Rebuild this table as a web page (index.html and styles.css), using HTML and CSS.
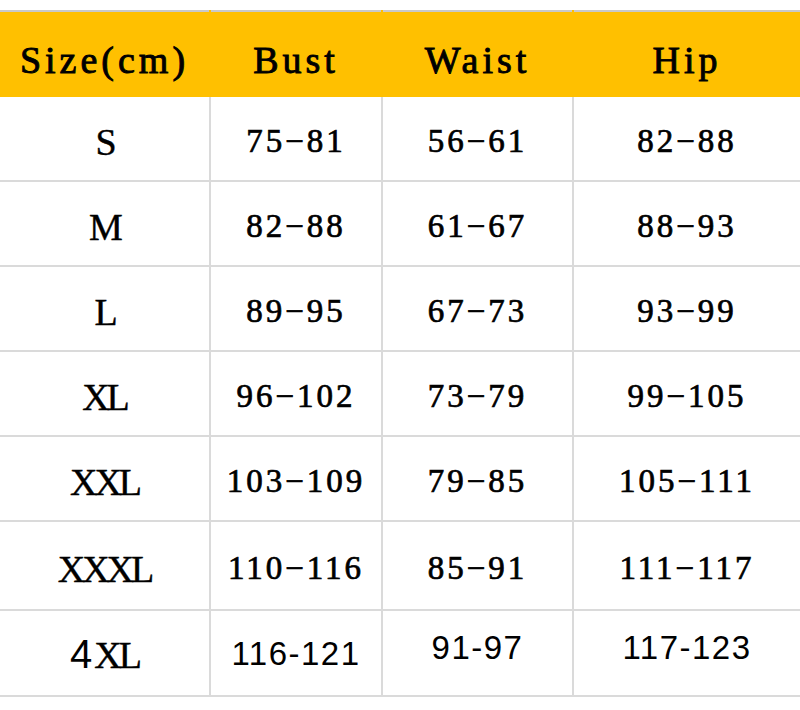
FILE: index.html
```html
<!DOCTYPE html>
<html>
<head>
<meta charset="utf-8">
<link rel="stylesheet" href="styles.css">
</head>
<body>
<table class="chart">
  <colgroup>
    <col class="c1"><col class="c2"><col class="c3"><col class="c4">
  </colgroup>
  <thead>
    <tr class="head">
      <th>Size(cm)</th><th>Bust</th><th>Waist</th><th>Hip</th>
    </tr>
  </thead>
  <tbody>
    <tr><td class="sz">S</td><td class="num">75−81</td><td class="num">56−61</td><td class="num">82−88</td></tr>
    <tr><td class="sz">M</td><td class="num">82−88</td><td class="num">61−67</td><td class="num">88−93</td></tr>
    <tr><td class="sz">L</td><td class="num">89−95</td><td class="num">67−73</td><td class="num">93−99</td></tr>
    <tr><td class="sz">XL</td><td class="num">96−102</td><td class="num">73−79</td><td class="num">99−105</td></tr>
    <tr><td class="sz">XXL</td><td class="num">103−109</td><td class="num">79−85</td><td class="num">105−111</td></tr>
    <tr class="tall"><td class="sz">XXXL</td><td class="num">110−116</td><td class="num">85−91</td><td class="num">111−117</td></tr>
    <tr class="last"><td class="sz"><span class="sans">4</span>XL</td><td class="sans">116-121</td><td class="sans up">91-97</td><td class="sans up">117-123</td></tr>
  </tbody>
</table>
</body>
</html>
```
FILE: styles.css
```css
html, body {
  margin: 0;
  padding: 0;
  background: #ffffff;
}
body {
  padding-top: 10px;
}
.chart {
  border-collapse: collapse;
  table-layout: fixed;
  width: 800px;
  color: #000;
}
.c1 { width: 210px; }
.c2 { width: 172px; }
.c3 { width: 191px; }
.c4 { width: 227px; }

.chart th, .chart td {
  border: 2px solid #dadada;
  text-align: center;
  padding: 0;
}
.chart th:first-child, .chart td:first-child { border-left: none; }
.chart th:last-child, .chart td:last-child { border-right: none; }
.head th {
  background: #ffc000;
  border-color: #ffc000;
  border-top-color: #c9c9c9;
  height: 85px;
  font-family: "Liberation Serif", serif;
  font-weight: normal;
  font-size: 38px;
  letter-spacing: 4px;
  -webkit-text-stroke: 0.9px #000;
  padding-top: 12px;
  box-sizing: border-box;
}
.chart tbody tr { height: 85px; }
.chart tbody tr.tall { height: 89px; }
.chart tbody tr.last { height: 86px; }
.chart td { padding-top: 6px; }
.sz {
  font-family: "Liberation Serif", serif;
  font-size: 38px;
  letter-spacing: -3px;
  -webkit-text-stroke: 0.4px #000;
}
.num {
  font-family: "Liberation Serif", serif;
  font-size: 33px;
  letter-spacing: 3px;
  -webkit-text-stroke: 0.7px #000;
}
.sans {
  font-family: "Liberation Sans", Arial, sans-serif;
  font-size: 33px;
  letter-spacing: 1.5px;
  -webkit-text-stroke: 0;
}
.sz .sans {
  font-size: 40px;
  letter-spacing: 2px;
}
.last td { padding-top: 2px; }
.last td.up { padding-top: 0; padding-bottom: 10px; }
```
